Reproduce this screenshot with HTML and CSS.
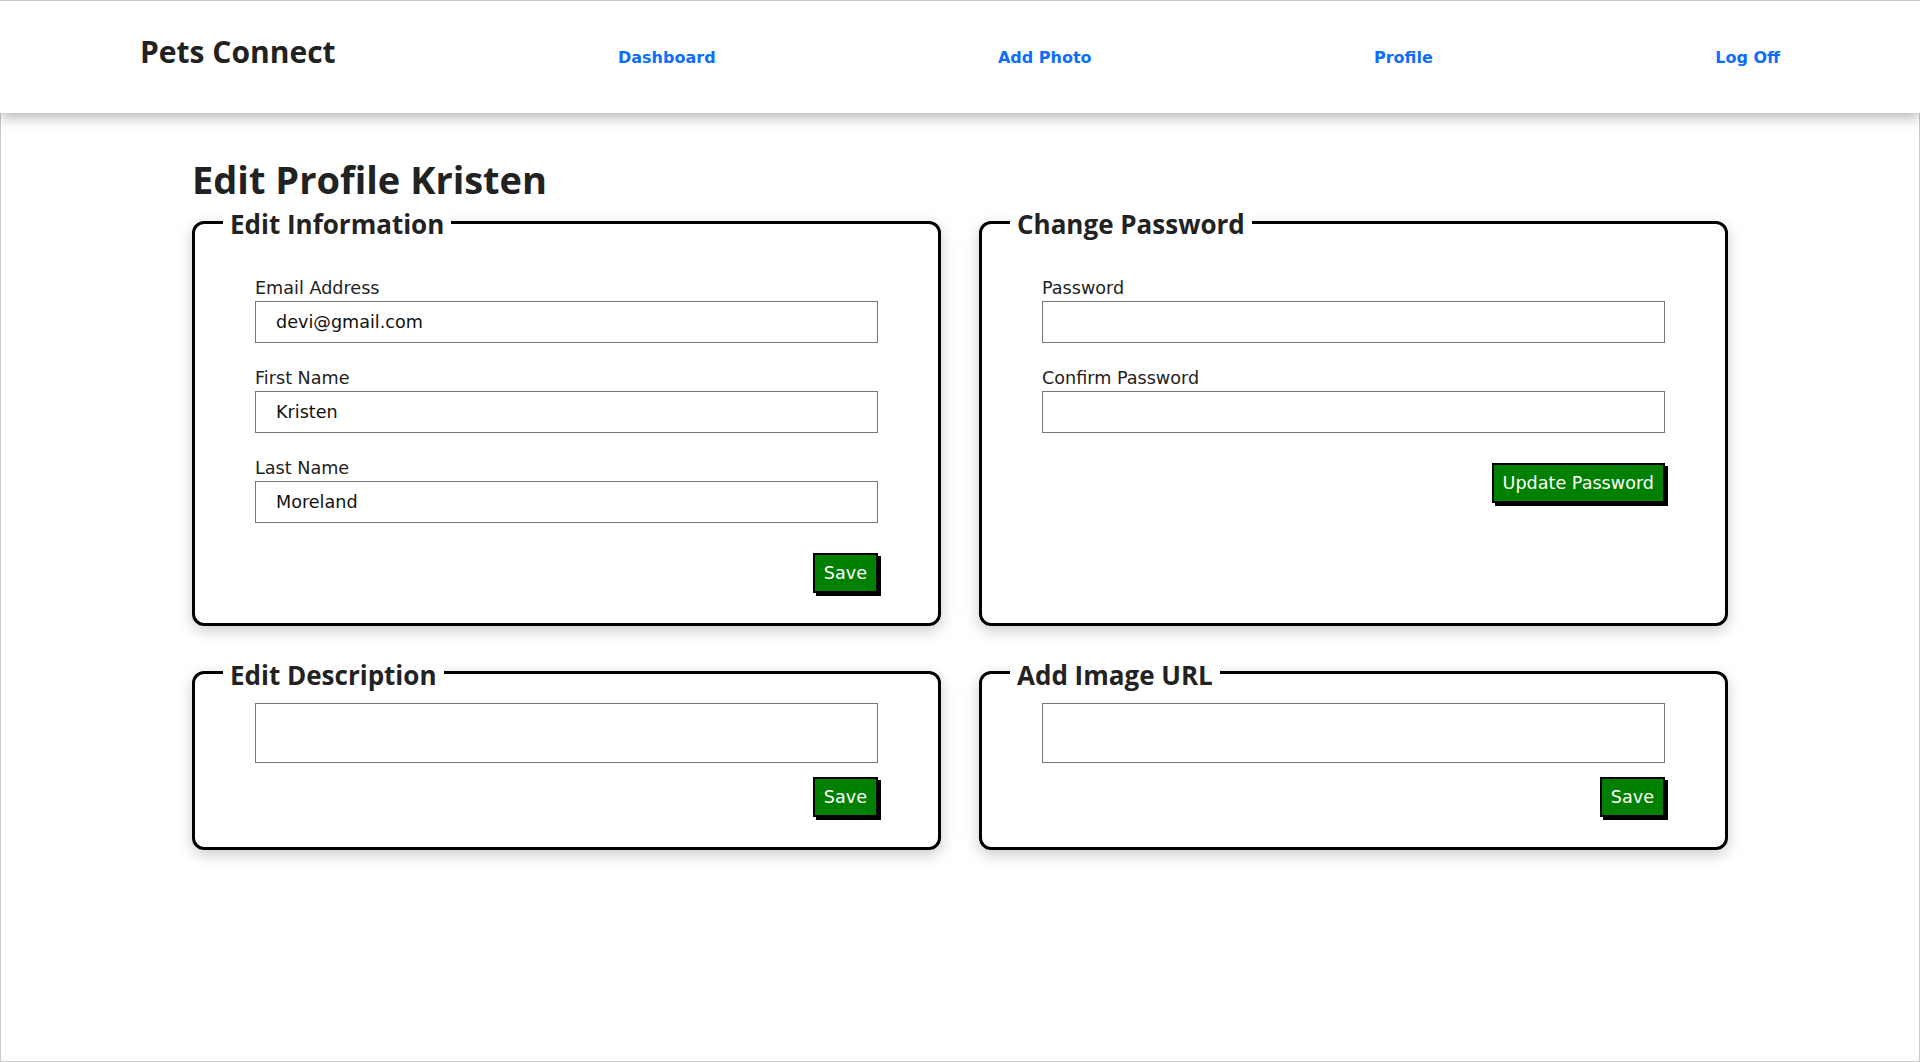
FILE: index.html
```html
<!DOCTYPE html>
<html lang="en">
<head>
<meta charset="utf-8">
<title>Pets Connect - Edit Profile</title>
<link rel="stylesheet" href="styles.css">
</head>
<body>
<div class="page">
  <header class="site-header">
    <div class="logo">Pets Connect</div>
    <nav class="nav">
      <a class="nav-link" href="#">Dashboard</a>
      <a class="nav-link" href="#">Add Photo</a>
      <a class="nav-link" href="#">Profile</a>
      <a class="nav-link" href="#">Log Off</a>
    </nav>
  </header>

  <main class="content">
    <h1 class="page-title">Edit Profile Kristen</h1>

    <div class="card-grid">
      <fieldset class="card">
        <legend class="card-title">Edit Information</legend>
        <div class="card-body">
          <div class="fields">
            <div class="field">
              <label class="field-label">Email Address</label>
              <input class="field-input" type="text" value="devi@gmail.com">
            </div>
            <div class="field">
              <label class="field-label">First Name</label>
              <input class="field-input" type="text" value="Kristen">
            </div>
            <div class="field">
              <label class="field-label">Last Name</label>
              <input class="field-input" type="text" value="Moreland">
            </div>
          </div>
          <div class="actions"><button class="btn" type="button">Save</button></div>
        </div>
      </fieldset>

      <fieldset class="card">
        <legend class="card-title">Change Password</legend>
        <div class="card-body">
          <div class="fields">
            <div class="field">
              <label class="field-label">Password</label>
              <input class="field-input" type="password">
            </div>
            <div class="field">
              <label class="field-label">Confirm Password</label>
              <input class="field-input" type="password">
            </div>
          </div>
          <div class="actions"><button class="btn" type="button">Update Password</button></div>
        </div>
      </fieldset>

      <fieldset class="card">
        <legend class="card-title">Edit Description</legend>
        <div class="card-body">
          <textarea class="field-input field-tall"></textarea>
          <div class="actions actions-tight"><button class="btn" type="button">Save</button></div>
        </div>
      </fieldset>

      <fieldset class="card">
        <legend class="card-title">Add Image URL</legend>
        <div class="card-body">
          <input class="field-input field-tall" type="text">
          <div class="actions actions-tight"><button class="btn" type="button">Save</button></div>
        </div>
      </fieldset>
    </div>
  </main>
</div>
</body>
</html>
```

FILE: styles.css
```css
* {
  box-sizing: border-box;
}

html, body {
  margin: 0;
  padding: 0;
}

body {
  background: #ffffff;
  color: #222222;
  font-family: "DejaVu Sans", Verdana, sans-serif;
  font-size: 17.6px;
}

.page {
  min-height: 100vh;
  outline: 1px solid #c9c9c9;
  outline-offset: -1px;
}

/* Header */
.site-header {
  position: relative;
  z-index: 2;
  height: 113px;
  background: #ffffff;
  display: flex;
  align-items: baseline;
  padding: 31px 140px 0 140px;
  box-shadow: 0 5px 12px rgba(0, 0, 0, 0.28);
  border-top: 1px solid #c9c9c9;
}

.logo {
  font-family: "Open Sans", "Noto Sans", sans-serif;
  font-weight: 700;
  font-size: 30px;
  line-height: 40px;
  color: #222222;
}

.nav {
  margin-left: auto;
  width: 1162px;
  display: flex;
  justify-content: space-between;
  align-items: baseline;
}

.nav-link {
  font-family: "DejaVu Sans", Verdana, sans-serif;
  font-weight: 700;
  font-size: 16px;
  line-height: 20px;
  color: #0d6efd;
  text-decoration: none;
}

/* Main */
.content {
  width: 80%;
  margin: 0 auto;
  padding-top: 44px;
}

.page-title {
  font-family: "Open Sans", "Noto Sans", sans-serif;
  font-weight: 700;
  font-size: 38px;
  line-height: 44px;
  margin: 0 0 5px 0;
  color: #222222;
}

.card-grid {
  display: grid;
  grid-template-columns: 1fr 1fr;
  column-gap: 38px;
  row-gap: 31px;
}

.card {
  margin: 0;
  min-width: 0;
  padding: 0;
  border: 3px solid #000000;
  border-radius: 12px;
  background: #ffffff;
  box-shadow: 0 5px 15px rgba(0, 0, 0, 0.2);
}

.card-title {
  margin-left: 28px;
  padding: 5px 7px 0 7px;
  height: 32px;
  background: #ffffff;
  font-family: "Open Sans", "Noto Sans", sans-serif;
  font-weight: 700;
  font-size: 26px;
  line-height: 27px;
  color: #222222;
}

.card-body {
  padding: 14.5px 60px 30px 60px;
}

.fields {
  padding-top: 25px;
}

.field {
  margin-bottom: 25px;
}

.field:last-child {
  margin-bottom: 0;
}

.field-label {
  display: block;
  line-height: 20px;
  margin-bottom: 3px;
  color: #222222;
}

.field-input {
  display: block;
  width: 100%;
  height: 42px;
  margin: 0;
  padding: 0 20px;
  border: 1px solid #767676;
  border-radius: 0;
  background: #ffffff;
  font-family: "DejaVu Sans", Verdana, sans-serif;
  font-size: 17.6px;
  color: #111111;
}

.field-tall {
  height: 60px;
  resize: none;
}

.actions {
  display: flex;
  justify-content: flex-end;
  margin-top: 30px;
}

.actions-tight {
  margin-top: 14px;
}

.btn {
  font-family: "DejaVu Sans", Verdana, sans-serif;
  font-size: 17.6px;
  line-height: 20px;
  padding: 8px 9px;
  color: #ffffff;
  background: #008000;
  border: 2px solid #000000;
  border-radius: 0;
  box-shadow: 3px 3px 0 #000000;
  cursor: pointer;
}
```
